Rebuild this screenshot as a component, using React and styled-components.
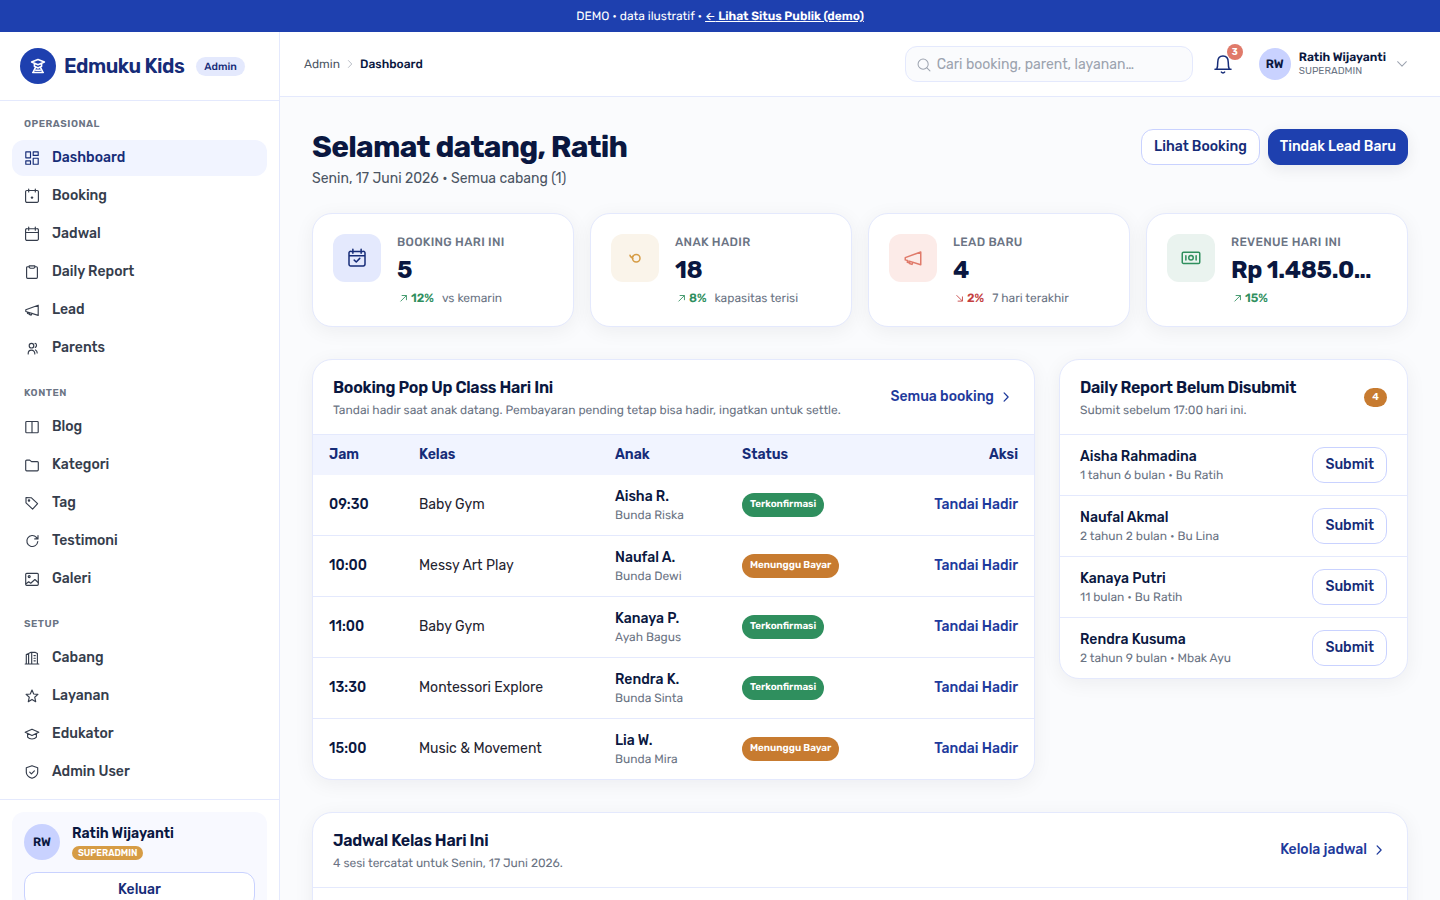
import React from 'react'
import styled, { createGlobalStyle, css } from 'styled-components'

const GlobalStyle = createGlobalStyle`
  * { box-sizing: border-box; margin: 0; padding: 0; }
  html, body, #root { height: 100%; }
  body {
    font-family: Rubik, Roboto, 'Liberation Sans', sans-serif;
    font-size: 14px;
    line-height: 20px;
    color: #1f2430;
    background: #fafbfd;
    overflow: hidden;
  }
  button, input { font: inherit; color: inherit; }
`

// stroke icons on a 16 unit grid
const ICONS = {
  dashboard: <path d="M1.8 1.8h4.7v6H1.8zM9.2 1.8h5v3.6h-5zM9.2 8.2h5v6h-5zM1.8 10.8h4.7v3.4H1.8z" />,
  booking: <><path d="M3 2.5h10A1.3 1.3 0 0 1 14.4 4v9a1.3 1.3 0 0 1-1.3 1.3H3A1.3 1.3 0 0 1 1.6 13V4A1.3 1.3 0 0 1 3 2.5zM4.7 1v3M11.3 1v3" /><path d="M8 9v1.200M7.300 9.600h1.400" strokeWidth="1.400" /></>,
  calendar: <path d="M3 2.7h10A1.3 1.3 0 0 1 14.4 4v9a1.3 1.3 0 0 1-1.3 1.3H3A1.3 1.3 0 0 1 1.6 13V4A1.3 1.3 0 0 1 3 2.7zM4.7 1v3.2M11.3 1v3.2M1.8 6.5h12.4" />,
  calendarCheck: <path d="M3 2.7h10A1.3 1.3 0 0 1 14.4 4v9a1.3 1.3 0 0 1-1.3 1.3H3A1.3 1.3 0 0 1 1.6 13V4A1.3 1.3 0 0 1 3 2.7zM4.7 1v3.2M11.3 1v3.2M1.8 6.2h12.4M5.8 9.7l1.6 1.5 2.8-2.9" />,
  clipboard: <path d="M5.2 2.7H3.6a1 1 0 0 0-1 1v9.6a1 1 0 0 0 1 1h8.8a1 1 0 0 0 1-1V3.7a1 1 0 0 0-1-1h-1.6M5.2 1.8h5.6v1.5l-.9.9H6.1l-.9-.9z" />,
  megaphone: <path d="M14.2 3.2v10.2L1.8 9.5V7.7zM3.5 10v1.5l2 .5M5.2 10.6v1.8l2 .7.7-1.7" />,
  parents: <><circle cx="7.5" cy="5.7" r="2.3" /><path d="M4.2 14v-.6a3.3 3.3 0 0 1 6.6 0v.6M11 3.3c2 .5 1.900 3.400.300 4.100M11.500 9.900c1.200.6 1.700 1.500 1.700 3" /></>,
  blog: <path d="M2.600 2.500h10.800a.8.800 0 0 1 .8.800v9.600a.8.800 0 0 1-.8.800H2.600a.8.800 0 0 1-.8-.8V3.300a.8.800 0 0 1 .8-.8zM8 2.500v11.200" />,
  folder: <path d="M2.7 3.1h3l1.800 1.500h5.800a1 1 0 0 1 1 1v7.200a1 1 0 0 1-1 1H2.700a1 1 0 0 1-1-1V4.100a1 1 0 0 1 1-1z" />,
  tag: <><path d="M2 2.500l5.200.2 6.400 6-5 5.400L2 7.800z" /><circle cx="5" cy="5.500" r=".7" fill="currentColor" /></>,
  refresh: <path d="M13.800 8.500a5.500 5.500 0 1 1-1.400-4.200l1.200 1.400M14 2.600v3.300h-3.300" />,
  gallery: <><rect x="1.700" y="2.300" width="12.600" height="12" rx="1" /><circle cx="5.200" cy="5.600" r="1" /><path d="M2 12.800l2.700-2 2 1.400 4.200-3.700 3.300 3" /></>,
  building: <path d="M4.600 14V3.500L7 2.300h4l2.400 1.200V14M2.300 14V4.600l2.300-1M1.200 14h13.600M7.700 2.300V14M10 5.600h1.300M10 8.200h1.300M10 10.800h1.300" />,
  star: <path d="M8 2l1.700 4 4.200.4-3.200 2.800 1 4.500L8 11.400l-3.700 2.300 1-4.500L2.100 6.400l4.200-.4z" />,
  school: <path d="M8 3.200l6.800 3L8 9.400l-6.800-3.200zM3.600 7.600v3.500c2 2.500 6.800 2.500 8.800 0V7.600" />,
  shield: <path d="M8 1.700l5.700 2v4.500c0 3-2.700 5-5.700 6.100-3-1.100-5.700-3.100-5.700-6.100V3.700zM5.700 8.200l1.700 1.700 3-3" />,
  search: <><circle cx="7" cy="7" r="5.800" /><path d="M11.300 11.300l3.500 3.500" /></>,
  bell: <path d="M1.600 12.200h12.800M3 12c.8-1.500.8-3 .8-5.500C3.800 3.400 5.500 1.600 8 1.600s4.200 1.800 4.200 4.900c0 2.500 0 4 .8 5.500M6.700 14.500c.6.800 2 .8 2.600 0" />,
  down: <path d="M3 5.400L8 10.400l5-5" />,
  right: <path d="M5.500 2.500L10.800 8l-5.300 5.500" />,
  up: <path d="M4.500 13L13 4.500M6.500 4h7v6.800" />,
  fall: <path d="M4.500 4L13 12.500M13.500 6.200V13h-7" />,
  child: <><circle cx="9" cy="8.200" r="3" /><path d="M6.600 6.300C5.600 8 4.400 7.800 4 5.800M4.600 6.800l1.600 1.600" /></>,
  cash: <><rect x="1" y="3.300" width="14" height="9" rx="1" /><circle cx="8" cy="7.800" r="1.800" /><path d="M3.900 6.100v3.400M12.100 6.100v3.400" /></>,
  logo: <path d="M8 2.200l5.700 2.300L8 6.900 2.300 4.500zM4.800 6v2.300l3.200 1.500 3.200-1.500V6M3.700 13.500l2-4M12.300 13.500l-2-4M3.300 13.700h9.400M6 11.700h4" />,
}

function Icon({ name, size = 16, weight = 1.15 }) {
  return (
    <Svg width={size} height={size} viewBox="0 0 16 16" strokeWidth={weight}>
      {ICONS[name]}
    </Svg>
  )
}

const groups = [
  { title: 'OPERASIONAL', items: [
    ['dashboard', 'Dashboard'], ['booking', 'Booking'], ['calendar', 'Jadwal'],
    ['clipboard', 'Daily Report'], ['megaphone', 'Lead'], ['parents', 'Parents'],
  ] },
  { title: 'KONTEN', items: [
    ['blog', 'Blog'], ['folder', 'Kategori'], ['tag', 'Tag'], ['refresh', 'Testimoni'], ['gallery', 'Galeri'],
  ] },
  { title: 'SETUP', items: [
    ['building', 'Cabang'], ['star', 'Layanan'], ['school', 'Edukator'], ['shield', 'Admin User'],
  ] },
]

const stats = [
  { icon: 'calendarCheck', tone: 'blue', label: 'BOOKING HARI INI', value: '5', trend: '12%', note: 'vs kemarin' },
  { icon: 'child', tone: 'gold', label: 'ANAK HADIR', value: '18', trend: '8%', note: 'kapasitas terisi' },
  { icon: 'megaphone', tone: 'coral', label: 'LEAD BARU', value: '4', trend: '2%', note: '7 hari terakhir', down: true },
  { icon: 'cash', tone: 'green', label: 'REVENUE HARI INI', value: 'Rp 1.485.0…', trend: '15%' },
]

const bookings = [
  ['09:30', 'Baby Gym', 'Aisha R.', 'Bunda Riska', true],
  ['10:00', 'Messy Art Play', 'Naufal A.', 'Bunda Dewi', false],
  ['11:00', 'Baby Gym', 'Kanaya P.', 'Ayah Bagus', true],
  ['13:30', 'Montessori Explore', 'Rendra K.', 'Bunda Sinta', true],
  ['15:00', 'Music & Movement', 'Lia W.', 'Bunda Mira', false],
]

const reports = [
  ['Aisha Rahmadina', '1 tahun 6 bulan • Bu Ratih'],
  ['Naufal Akmal', '2 tahun 2 bulan • Bu Lina'],
  ['Kanaya Putri', '11 bulan • Bu Ratih'],
  ['Rendra Kusuma', '2 tahun 9 bulan • Mbak Ayu'],
]

export default function App() {
  return (
    <Page>
      <GlobalStyle />
      <DemoBar>DEMO • data ilustratif •&nbsp;<DemoLink><Arrow>←</Arrow> Lihat Situs Publik (demo)</DemoLink></DemoBar>
      <Shell>
        <Sidebar>
          <Brand>
            <Logo><Icon name="logo" size={18} weight={1.4} /></Logo>
            <BrandName>Edmuku Kids</BrandName>
            <AdminTag>Admin</AdminTag>
          </Brand>
          <Nav>
            {groups.map((group) => (
              <NavGroup key={group.title}>
                <NavTitle>{group.title}</NavTitle>
                {group.items.map(([icon, label]) => (
                  <NavItem key={label} $active={label === 'Dashboard'}>
                    <Icon name={icon} />
                    {label}
                  </NavItem>
                ))}
              </NavGroup>
            ))}
          </Nav>
          <SideFooter>
            <UserCard>
              <UserRow>
                <Avatar $size={36}>RW</Avatar>
                <div>
                  <UserName>Ratih Wijayanti</UserName>
                  <RoleBadge>SUPERADMIN</RoleBadge>
                </div>
              </UserRow>
              <Button>Keluar</Button>
            </UserCard>
          </SideFooter>
        </Sidebar>
        <Main>
          <Topbar>
            <Crumbs>
              Admin
              <Icon name="right" size={10} />
              <strong>Dashboard</strong>
            </Crumbs>
            <Search>
              <Icon name="search" size={14} />
              <span>Cari booking, parent, layanan…</span>
            </Search>
            <Bell>
              <Icon name="bell" size={20} weight={1.2} />
              <BellCount>3</BellCount>
            </Bell>
            <Profile>
              <Avatar $size={32}>RW</Avatar>
              <div>
                <ProfileName>Ratih Wijayanti</ProfileName>
                <ProfileRole>SUPERADMIN</ProfileRole>
              </div>
              <Icon name="down" size={14} />
            </Profile>
          </Topbar>
          <Content>
            <Heading>
              <div>
                <Title>Selamat datang, Ratih</Title>
                <Subtitle>Senin, 17 Juni 2026 • Semua cabang (1)</Subtitle>
              </div>
              <Actions>
                <Button>Lihat Booking</Button>
                <Button $primary>Tindak Lead Baru</Button>
              </Actions>
            </Heading>
            <Stats>
              {stats.map((s) => (
                <StatCard key={s.label}>
                  <StatIcon $tone={s.tone}><Icon name={s.icon} size={20} weight={1.2} /></StatIcon>
                  <StatBody>
                    <StatLabel>{s.label}</StatLabel>
                    <StatValue>{s.value}</StatValue>
                    <StatTrend $down={s.down}>
                      <Icon name={s.down ? 'fall' : 'up'} size={10} weight={1.4} />
                      <b>{s.trend}</b>
                      {s.note && <span>{s.note}</span>}
                    </StatTrend>
                  </StatBody>
                </StatCard>
              ))}
            </Stats>
            <Columns>
              <Card>
                <CardHead>
                  <div>
                    <CardTitle>Booking Pop Up Class Hari Ini</CardTitle>
                    <CardText>Tandai hadir saat anak datang. Pembayaran pending tetap bisa hadir, ingatkan untuk settle.</CardText>
                  </div>
                  <CardLink>Semua booking<Icon name="right" size={12} weight={1.7} /></CardLink>
                </CardHead>
                <TableHead>
                  <span>Jam</span><span>Kelas</span><span>Anak</span><span>Status</span><End>Aksi</End>
                </TableHead>
                {bookings.map(([time, kelas, child, parent, paid]) => (
                  <TableRow key={time}>
                    <Time>{time}</Time>
                    <span>{kelas}</span>
                    <div>
                      <Name>{child}</Name>
                      <Small>{parent}</Small>
                    </div>
                    <Status $paid={paid}>{paid ? 'Terkonfirmasi' : 'Menunggu Bayar'}</Status>
                    <RowAction>Tandai Hadir</RowAction>
                  </TableRow>
                ))}
              </Card>
              <Card>
                <CardHead>
                  <div>
                    <CardTitle>Daily Report Belum Disubmit</CardTitle>
                    <CardText>Submit sebelum 17:00 hari ini.</CardText>
                  </div>
                  <CountBadge>4</CountBadge>
                </CardHead>
                {reports.map(([name, detail]) => (
                  <ReportRow key={name}>
                    <div>
                      <Name>{name}</Name>
                      <Small>{detail}</Small>
                    </div>
                    <Button>Submit</Button>
                  </ReportRow>
                ))}
              </Card>
            </Columns>
            <Card>
              <CardHead>
                <div>
                  <CardTitle>Jadwal Kelas Hari Ini</CardTitle>
                  <CardText>4 sesi tercatat untuk Senin, 17 Juni 2026.</CardText>
                </div>
                <CardLink>Kelola jadwal<Icon name="right" size={12} weight={1.7} /></CardLink>
              </CardHead>
              <ScheduleSpace />
            </Card>
          </Content>
        </Main>
      </Shell>
    </Page>
  )
}

const Svg = styled.svg`
  display: block;
  flex: none;
  fill: none;
  stroke: currentColor;
  stroke-linecap: round;
  stroke-linejoin: round;
`

// 12px copy gets squashed by hinting otherwise
const smallText = css`
  font-size: 12px;
  line-height: 16px;
  text-rendering: geometricPrecision;
`

const Page = styled.div`
  height: 900px;
  display: flex;
  flex-direction: column;
  overflow: hidden;
`
const DemoBar = styled.div`
  ${smallText}
  flex: none;
  height: 32px;
  display: flex;
  align-items: center;
  justify-content: center;
  background: #1e40af;
  color: white;
`
const DemoLink = styled.a`
  font-weight: 600;
  text-decoration: underline;
`
const Arrow = styled.span`
  font-family: Inter, sans-serif;
  font-size: 11px;
`
const Shell = styled.div`
  flex: 1;
  min-height: 0;
  display: flex;
`
const Sidebar = styled.aside`
  flex: none;
  width: 280px;
  display: flex;
  flex-direction: column;
  background: white;
  border-right: 1px solid #e4e9fd;
  overflow: hidden;
`
const Brand = styled.div`
  flex: none;
  height: 69px;
  padding: 0 20px;
  display: flex;
  align-items: center;
  gap: 8px;
  border-bottom: 1px solid #e4e9fd;
`
const Logo = styled.div`
  width: 36px;
  height: 36px;
  display: grid;
  place-items: center;
  border-radius: 50%;
  background: #1e40af;
  color: white;
`
const BrandName = styled.div`
  font-size: 20px;
  font-weight: 600;
  letter-spacing: -.025em;
  color: #162c78;
  white-space: nowrap;
`
const AdminTag = styled.span`
  margin-left: 4px;
  padding: 0 8px;
  height: 19px;
  line-height: 19px;
  border-radius: 10px;
  background: #e4e9fd;
  color: #162c78;
  font-size: 10.5px;
  font-weight: 500;
  text-rendering: geometricPrecision;
`
const Nav = styled.nav`
  flex: none;
  height: 698px;
  padding: 12px 12px 0;
`
const NavGroup = styled.div`
  margin-bottom: 16px;
`
const NavTitle = styled.div`
  height: 27px;
  padding: 4px 12px 0;
  font-size: 10px;
  line-height: 15px;
  font-weight: 600;
  letter-spacing: .5px;
  color: #6b7484;
`
const NavItem = styled.div`
  height: 36px;
  margin-bottom: 2px;
  padding: 0 12px;
  display: flex;
  align-items: center;
  gap: 12px;
  border-radius: 12px;
  font-weight: 500;
  color: ${(p) => (p.$active ? '#162c78' : '#353d4c')};
  background: ${(p) => (p.$active ? '#f1f4ff' : 'transparent')};
`
const SideFooter = styled.div`
  flex: none;
  padding: 12px;
  border-top: 1px solid #e4e9fd;
`
const UserCard = styled.div`
  padding: 12px;
  display: flex;
  flex-direction: column;
  gap: 12px;
  border-radius: 12px;
  background: #f8f9ff;
`
const UserRow = styled.div`
  height: 36px;
  display: flex;
  align-items: center;
  gap: 12px;
`
const Avatar = styled.div`
  ${smallText}
  flex: none;
  width: ${(p) => p.$size}px;
  height: ${(p) => p.$size}px;
  display: grid;
  place-items: center;
  border-radius: 50%;
  background: #c9d2ff;
  color: #0a1740;
  font-weight: 600;
`
const UserName = styled.div`
  line-height: 20px;
  font-weight: 600;
  color: #0a1740;
`
const RoleBadge = styled.div`
  width: fit-content;
  margin-top: 2px;
  padding: 0 6px;
  border-radius: 8px;
  background: #d69c45;
  color: white;
  font-size: 9px;
  line-height: 14px;
  font-weight: 600;
`
const Button = styled.button`
  flex: none;
  height: 36px;
  padding: 0 12px;
  border: 1px solid #c9d2ff;
  border-radius: 12px;
  background: white;
  color: #162c78;
  font-weight: 500;
  ${(p) => p.$primary && css`
    padding: 0 11px;
    border-color: #1e40af;
    background: #1e40af;
    color: white;
    box-shadow: 0 4px 16px rgba(15, 23, 42, .08);
  `}
`
const Main = styled.main`
  flex: 1;
  min-width: 0;
  display: flex;
  flex-direction: column;
`
const Topbar = styled.header`
  flex: none;
  height: 65px;
  padding: 0 32px 0 24px;
  display: flex;
  align-items: center;
  background: white;
  border-bottom: 1px solid #e4e9fd;
`
const Crumbs = styled.div`
  ${smallText}
  flex: 1;
  display: flex;
  align-items: center;
  gap: 5px;
  color: #4b5563;
  ${Svg} { color: #9ca3af; }
  strong { font-weight: 500; color: #0a1740; }
`
const Search = styled.div`
  width: 288px;
  height: 36px;
  padding: 1px 10px 0 11px;
  display: flex;
  align-items: center;
  gap: 6px;
  border: 1px solid #e4e9fd;
  border-radius: 12px;
  background: #fafbfd;
  color: #9ca3af;
`
const Bell = styled.div`
  position: relative;
  width: 40px;
  height: 40px;
  margin-left: 10px;
  display: grid;
  place-items: center;
  color: #162c78;
`
const BellCount = styled.span`
  position: absolute;
  top: 0;
  right: 0;
  width: 16px;
  height: 16px;
  border-radius: 50%;
  background: #e07a6a;
  color: white;
  font-size: 9px;
  line-height: 16px;
  font-weight: 700;
  text-align: center;
`
const Profile = styled.div`
  margin-left: 16px;
  display: flex;
  align-items: center;
  gap: 8px;
  > ${Svg} { margin: 0 -1px 0 1px; color: #9ca3af; }
`
const ProfileName = styled.div`
  ${smallText}
  line-height: 14px;
  font-weight: 600;
  color: #0a1740;
`
const ProfileRole = styled.div`
  font-size: 10px;
  line-height: 14px;
  color: #6b7484;
`
const Content = styled.div`
  flex: 1;
  padding: 32px 32px 0;
`
const Heading = styled.div`
  display: flex;
  justify-content: space-between;
  height: 60px;
`
const Title = styled.h1`
  font-size: 30px;
  line-height: 36px;
  font-weight: 700;
  letter-spacing: -.025em;
  color: #0a1740;
`
const Subtitle = styled.p`
  margin-top: 4px;
  color: #4b5563;
`
const Actions = styled.div`
  display: flex;
  gap: 8px;
`
const surface = css`
  background: white;
  border: 1px solid #e4e9fd;
  border-radius: 20px;
  box-shadow: 0 4px 20px rgba(15, 23, 42, .06);
`
const Stats = styled.section`
  margin-top: 24px;
  display: grid;
  grid-template-columns: repeat(4, minmax(0, 1fr));
  gap: 16px;
`
const StatCard = styled.div`
  ${surface}
  height: 114px;
  padding: 20px;
  display: flex;
  gap: 16px;
`
const tones = {
  blue: ['#e4e9fd', '#162c78'],
  gold: ['#faf4ea', '#d69c45'],
  coral: ['#fcebe8', '#e07a6a'],
  green: ['#eaf3ef', '#2f8f5e'],
}
const StatIcon = styled.div`
  flex: none;
  width: 48px;
  height: 48px;
  display: grid;
  place-items: center;
  border-radius: 12px;
  background: ${(p) => tones[p.$tone][0]};
  color: ${(p) => tones[p.$tone][1]};
`
const StatBody = styled.div`
  flex: 1;
  min-width: 0;
`
const StatLabel = styled.div`
  ${smallText}
  font-weight: 500;
  letter-spacing: .3px;
  color: #6b7484;
`
const StatValue = styled.div`
  margin-top: 4px;
  font-size: 24px;
  line-height: 32px;
  font-weight: 700;
  letter-spacing: -.35px;
  color: #0a1740;
  white-space: nowrap;
`
const StatTrend = styled.div`
  ${smallText}
  margin-top: 4px;
  display: flex;
  align-items: center;
  color: ${(p) => (p.$down ? '#c53f3f' : '#2f8f5e')};
  ${Svg} { margin: 0 3px 0 1px; }
  b { font-weight: 600; }
  span { margin-left: 8px; color: #6b7484; }
`
const Columns = styled.section`
  margin: 32px 0;
  display: grid;
  grid-template-columns: 723px 1fr;
  gap: 24px;
  align-items: start;
`
const Card = styled.div`
  ${surface}
  overflow: hidden;
`
const CardHead = styled.div`
  height: 75px;
  padding: 0 20px;
  display: flex;
  align-items: center;
  justify-content: space-between;
  border-bottom: 1px solid #e4e9fd;
`
const CardTitle = styled.h2`
  font-size: 16px;
  line-height: 24px;
  font-weight: 600;
  letter-spacing: -.25px;
  color: #0a1740;
`
const CardText = styled.p`
  ${smallText}
  margin-top: 2px;
  color: #6b7484;
`
const CardLink = styled.a`
  display: flex;
  align-items: center;
  gap: 6px;
  padding-right: 2px;
  font-weight: 500;
  color: #1e3a9c;
`
const tableGrid = css`
  display: grid;
  grid-template-columns: 90px 196px 127px 150px 1fr;
  align-items: center;
  padding: 0 16px;
`
const TableHead = styled.div`
  ${tableGrid}
  height: 40px;
  background: #f1f4ff;
  color: #162c78;
  font-weight: 600;
`
const TableRow = styled.div`
  ${tableGrid}
  height: 61px;
  border-bottom: 1px solid #e4e9fd;
  &:last-child { border-bottom: 0; height: 60px; }
`
const End = styled.span`
  text-align: right;
`
const Time = styled.span`
  font-weight: 500;
  color: #0a1740;
`
const Name = styled.div`
  line-height: 20px;
  font-weight: 500;
  color: #0a1740;
`
const Small = styled.div`
  ${smallText}
  color: #6b7484;
`
const Status = styled.span`
  justify-self: start;
  height: 24px;
  padding: 0 7.5px 0 8px;
  border-radius: 12px;
  background: ${(p) => (p.$paid ? '#2f8f5e' : '#c77b30')};
  color: white;
  font-size: 9.9px;
  line-height: 24px;
  font-weight: 600;
  text-rendering: geometricPrecision;
`
const RowAction = styled(End)`
  font-weight: 500;
  color: #1e3a9c;
`
const CountBadge = styled.span`
  width: 23px;
  height: 19px;
  border-radius: 10px;
  background: #c77b30;
  color: white;
  font-size: 10px;
  line-height: 18px;
  font-weight: 600;
  text-align: center;
`
const ReportRow = styled.div`
  height: 61px;
  padding: 0 20px;
  display: flex;
  align-items: center;
  justify-content: space-between;
  border-bottom: 1px solid #e4e9fd;
  &:last-child { border-bottom: 0; height: 60px; }
`
const ScheduleSpace = styled.div`
  height: 80px;
`
